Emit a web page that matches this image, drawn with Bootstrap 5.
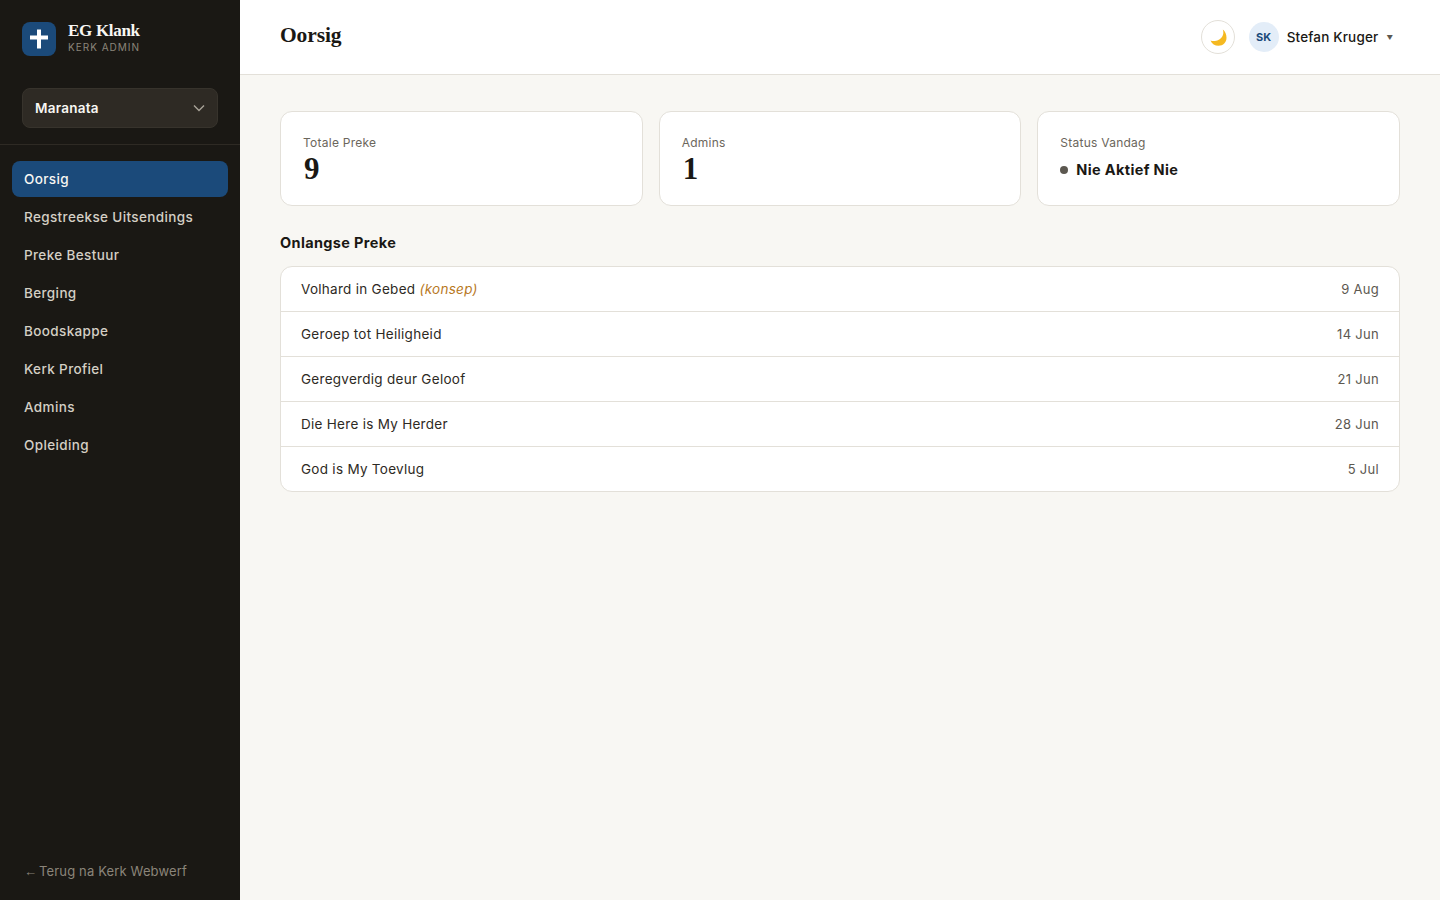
<!DOCTYPE html>
<html lang="af">
<head>
  <meta charset="UTF-8" />
  <meta name="viewport" content="width=device-width, initial-scale=1.0"/>
  <title>Oorsig</title>
  <link href="https://cdn.jsdelivr.net/npm/bootstrap@5.3.3/dist/css/bootstrap.min.css" rel="stylesheet"/>
  <style>
    body {
      font-family: "Inter", "Liberation Sans", sans-serif;
      background: #f8f7f3;
      color: #1a1814;
      font-size: 14px;
    }
    .serif { font-family: "Liberation Serif", "DejaVu Serif", serif; }
    .side {
      width: 240px;
      height: 900px;
      background: #1a1814;
    }
    .brand { height: 74px; padding: 22px 22px 0; gap: 12px; }
    .brand-mark {
      width: 34px; height: 34px;
      background: #1b4a7a;
      border-radius: 8px;
    }
    .brand-name { color: #f8f7f3; font-size: 17px; font-weight: 700; line-height: 18px; letter-spacing: -0.3px; }
    .brand-sub { color: #8b857a; font-size: 10px; letter-spacing: 1px; line-height: 14px; }
    .church-wrap { padding: 14px 22px 16px; border-bottom: 1px solid #2e2a24; }
    .church-pick {
      height: 40px;
      background: #2e2a24;
      border: 1px solid #37332c;
      border-radius: 8px;
      color: #f8f7f3;
      font-size: 13.5px;
      font-weight: 600;
      letter-spacing: .25px;
      padding: 0 12px;
    }
    .side-nav { padding: 16px 12px 0; gap: 2px; }
    .side-link {
      display: block;
      height: 36px;
      line-height: 36px;
      padding: 0 12px;
      border-radius: 8px;
      color: #d4cfc5;
      font-size: 13.5px;
      font-weight: 500;
      letter-spacing: .37px;
      text-decoration: none;
    }
    .side-link.on { background: #1b4a7a; color: #f8f7f3; }
    .back-link { color: #8b857a; font-size: 13px; letter-spacing: .15px; padding: 0 24px 19px; text-decoration: none; line-height: 18px; }
    .back-arrow { font-family: "Liberation Sans", sans-serif; font-size: 13px; letter-spacing: 0; margin-right: 2px; }
    .top-bar {
      height: 75px;
      background: #fff;
      border-bottom: 1px solid #e3e0d9;
      padding: 0 40px;
    }
    .page-title { font-size: 21.5px; font-weight: 700; margin: -2px 0 0; letter-spacing: -0.1px; }
    .moon-btn {
      width: 34px; height: 34px;
      border: 1px solid #e3e0d9;
      border-radius: 50%;
      background: #fff;
      padding: 0;
      margin-right: 14px;
    }
    .avatar {
      width: 30px; height: 30px;
      background: #e3edf8;
      color: #1b4a7a;
      border-radius: 50%;
      font-size: 11px;
      font-weight: 700;
    }
    .user-name { font-size: 13.5px; font-weight: 500; letter-spacing: .17px; }
    .caret-mark { font-size: 6.5px; color: #5c5850; margin: 3px 7px 0 0; }
    .body-pad { padding: 36px 40px; }
    .stat-grid { display: grid; grid-template-columns: repeat(3, 1fr); gap: 16px; }
    .stat-box {
      height: 95px;
      background: #fff;
      border: 1px solid #e3e0d9;
      border-radius: 12px;
      padding: 22px;
    }
    .stat-label { color: #6b665c; font-size: 12px; letter-spacing: .25px; line-height: 18px; }
    .stat-num { font-size: 31px; font-weight: 700; line-height: 32px; margin-top: 1px; padding-left: 1px; }
    .stat-state { font-size: 14.5px; font-weight: 700; letter-spacing: .35px; margin-top: 8px; line-height: 20px; gap: 8px; }
    .dot { width: 8px; height: 8px; border-radius: 50%; background: #5c5850; }
    .sec-title { font-size: 14.5px; font-weight: 700; letter-spacing: .35px; line-height: 20px; margin: 27px 0 13px; }
    .sermon-list { border: 1px solid #e3e0d9; border-radius: 12px; background: #fff; overflow: hidden; }
    .sermon-row {
      height: 45px;
      padding: 0 20px;
      border-bottom: 1px solid #e3e0d9;
      font-size: 13.5px;
      letter-spacing: .28px;
      color: #2e2a24;
    }
    .sermon-row:last-child { border-bottom: 0; height: 44px; }
    .draft { color: #b8791f; font-style: italic; }
    .when { color: #5c5850; font-size: 13px; letter-spacing: .3px; padding-top: 1px; }
  </style>
</head>
<body>
  <div class="d-flex">
    <aside class="side flex-shrink-0 d-flex flex-column">
      <div class="brand d-flex">
        <div class="brand-mark d-flex align-items-center justify-content-center">
          <svg width="20" height="20" viewBox="0 0 20 20"><path d="M8 0.500h4v6h7v4h-7v9H8v-9H1v-4h7z" fill="#fff"/></svg>
        </div>
        <div>
          <div class="brand-name serif">EG Klank</div>
          <div class="brand-sub">KERK ADMIN</div>
        </div>
      </div>
      <div class="church-wrap">
        <div class="church-pick d-flex align-items-center justify-content-between">
          <span>Maranata</span>
          <svg width="12" height="8" viewBox="0 0 12 8"><path d="M1 1.500l5 5 5-5" fill="none" stroke="#a8a398" stroke-width="1.400"/></svg>
        </div>
      </div>
      <nav class="side-nav d-flex flex-column">
        <a class="side-link on" href="#">Oorsig</a>
        <a class="side-link" href="#">Regstreekse Uitsendings</a>
        <a class="side-link" href="#">Preke Bestuur</a>
        <a class="side-link" href="#">Berging</a>
        <a class="side-link" href="#">Boodskappe</a>
        <a class="side-link" href="#">Kerk Profiel</a>
        <a class="side-link" href="#">Admins</a>
        <a class="side-link" href="#">Opleiding</a>
      </nav>
      <a class="back-link mt-auto" href="#"><span class="back-arrow">←</span>Terug na Kerk Webwerf</a>
    </aside>
    <div class="flex-grow-1">
      <header class="top-bar d-flex align-items-center justify-content-between">
        <h1 class="page-title serif">Oorsig</h1>
        <div class="d-flex align-items-center">
          <button class="moon-btn d-flex align-items-center justify-content-center" type="button">
            <svg width="20" height="20" viewBox="-1 -1 20 20"><path d="M13.800 1.500c1.900 5-1 10.600-7.800 11.500-1.700.2-3.200 0-4.500-.6 1.300 3.400 4.400 5.400 8 5.400 4.700 0 8-3.500 8-8 0-3.600-1.300-6.500-3.700-8.300z" fill="#f5b921"/></svg>
          </button>
          <div class="avatar d-flex align-items-center justify-content-center me-2">SK</div>
          <span class="user-name me-2">Stefan Kruger</span>
          <span class="caret-mark">▼</span>
        </div>
      </header>
      <main class="body-pad">
        <div class="stat-grid">
          <div class="stat-box">
            <div class="stat-label">Totale Preke</div>
            <div class="stat-num serif">9</div>
          </div>
          <div class="stat-box">
            <div class="stat-label">Admins</div>
            <div class="stat-num serif">1</div>
          </div>
          <div class="stat-box">
            <div class="stat-label">Status Vandag</div>
            <div class="stat-state d-flex align-items-center"><span class="dot"></span>Nie Aktief Nie</div>
          </div>
        </div>
        <h2 class="sec-title">Onlangse Preke</h2>
        <div class="sermon-list">
          <div class="sermon-row d-flex align-items-center justify-content-between"><span>Volhard in Gebed <span class="draft">(konsep)</span></span><span class="when">9 Aug</span></div>
          <div class="sermon-row d-flex align-items-center justify-content-between"><span>Geroep tot Heiligheid</span><span class="when">14 Jun</span></div>
          <div class="sermon-row d-flex align-items-center justify-content-between"><span>Geregverdig deur Geloof</span><span class="when">21 Jun</span></div>
          <div class="sermon-row d-flex align-items-center justify-content-between"><span>Die Here is My Herder</span><span class="when">28 Jun</span></div>
          <div class="sermon-row d-flex align-items-center justify-content-between"><span>God is My Toevlug</span><span class="when">5 Jul</span></div>
        </div>
      </main>
    </div>
  </div>
  <script src="https://cdn.jsdelivr.net/npm/bootstrap@5.3.3/dist/js/bootstrap.bundle.min.js"></script>
</body>
</html>
